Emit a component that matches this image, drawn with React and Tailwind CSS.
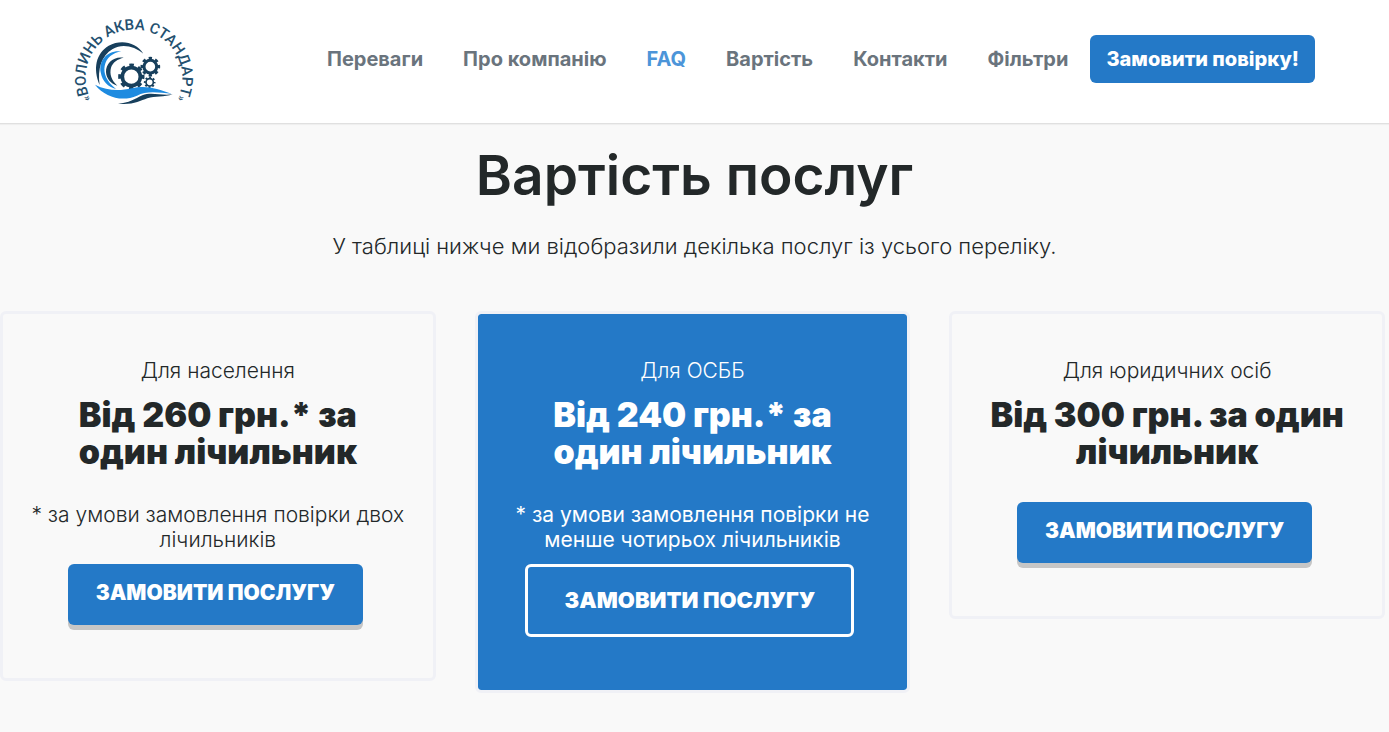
import React from 'react'

const navLinks = [
  { label: 'Переваги', href: '#advantages' },
  { label: 'Про компанію', href: '#about' },
  { label: 'FAQ', href: '#faq', active: true },
  { label: 'Вартість', href: '#pricing' },
  { label: 'Контакти', href: '#contacts' },
  { label: 'Фільтри', href: '#filters' },
]

const plans = [
  {
    title: 'Для населення',
    price: ['Від 260 грн.* за', 'один лічильник'],
    note: ['* за умови замовлення повірки двох', 'лічильників'],
  },
  {
    title: 'Для ОСББ',
    price: ['Від 240 грн.* за', 'один лічильник'],
    note: ['* за умови замовлення повірки не', 'менше чотирьох лічильників'],
    featured: true,
  },
  {
    title: 'Для юридичних осіб',
    price: ['Від 300 грн. за один', 'лічильник'],
  },
]

// Ring with square teeth: the dashed circle draws the teeth
const Gear = ({ cx, cy, r, width, teeth, tooth }) => (
  <g fill="none" stroke="#173f5c">
    <circle cx={cx} cy={cy} r={r} strokeWidth={width} />
    <circle
      cx={cx}
      cy={cy}
      r={r + width / 2 + tooth / 2 - 1}
      strokeWidth={tooth + 2}
      pathLength={teeth * 2}
      strokeDasharray="1 1"
      strokeDashoffset="0.5"
    />
  </g>
)

const Logo = () => (
  <svg viewBox="42 36 360 264" className="w-[120px] h-[88px] overflow-visible" role="img" aria-label="Волинь Аква Стандарт">
    <path id="logo-arc" d="M100 297 A145 145 0 1 1 344 297" fill="none" />
    <text fill="#24506f" textAnchor="middle" className="font-['Roboto',sans-serif] font-medium text-[45px]">
      <textPath href="#logo-arc" startOffset="50%">
        <tspan className="text-[32px]">«</tspan>ВОЛИНЬ АКВА СТАНДАРТ<tspan className="text-[32px]">»</tspan>
      </textPath>
    </text>
    <path d="M119 240 C98 190 108 145 146 122 C184 102 229 112 250 146 C224 124 187 115 158 132 C124 152 112 193 119 240Z" fill="#173f5c" />
    <path d="M184 139 C142 134 116 166 122 202 C127 230 144 246 168 252 C139 229 130 206 134 183 C139 158 158 144 184 139Z" fill="#1e8be0" />
    <path d="M191 158 C161 153 137 174 138 201 C139 221 153 237 172 242 C154 225 148 207 153 188 C158 172 173 162 191 158Z" fill="#173f5c" />
    <Gear cx={214} cy={215} r={27} width={11} teeth={8} tooth={7} />
    <Gear cx={271} cy={185} r={19} width={9} teeth={8} tooth={6} />
    <Gear cx={269} cy={232} r={11} width={5} teeth={8} tooth={4} />
    <path d="M105 239 C140 257 177 259 215 250 C258 239 292 251 335 266 C298 263 260 256 231 272 C187 291 136 278 105 239Z" fill="#1e8be0" />
    <path d="M174 296 C207 295 225 281 247 271 C275 260 303 273 338 268 C313 277 285 273 262 280 C240 288 216 301 174 296Z" fill="#173f5c" />
  </svg>
)

const Header = () => (
  <header className="bg-white border-b border-[#e0e0e0] shadow-[0_1px_1px_rgba(0,0,0,0.04)]">
    <div className="flex items-start justify-between px-[74px] pb-[18px]">
      <a href="#home" className="mt-[17px]">
        <Logo />
      </a>
      <nav className="mt-[35px] flex items-center gap-[22px]">
        <ul className="flex items-center gap-10">
          {navLinks.map((link) => (
            <li key={link.label}>
              <a
                href={link.href}
                className={link.active ? 'text-xl font-bold text-[#4c95d9]' : 'text-xl font-bold text-[#6a747d]'}
              >
                {link.label}
              </a>
            </li>
          ))}
        </ul>
        <button className="h-12 px-4 rounded-md bg-[#2479c7] text-white text-xl font-extrabold whitespace-nowrap">
          Замовити повірку!
        </button>
      </nav>
    </div>
  </header>
)

const Lines = ({ lines }) =>
  lines.map((line, i) => (
    <React.Fragment key={line}>
      {i > 0 && <br />}
      {line}
    </React.Fragment>
  ))

const PlanCard = ({ title, price, note, featured }) => (
  <article
    className={
      featured
        ? 'rounded-md border-[3px] border-[#f0f1f6] bg-[#2479c7] bg-clip-padding pt-11 pb-[53px] text-center text-white'
        : 'rounded-md border-[3px] border-[#f0f1f6] pt-11 pb-[53px] text-center'
    }
  >
    <p className="text-[21px] leading-[25px] font-light mb-[13px]">{title}</p>
    <h3 className="text-[34px] leading-[37px] font-black mb-8">
      <Lines lines={price} />
    </h3>
    {note && (
      <p className={featured ? 'text-[21px] leading-[25px] mb-3' : 'text-[21px] leading-[25px] font-light mb-3'}>
        <Lines lines={note} />
      </p>
    )}
    <button
      className={
        featured
          ? 'mr-[5px] h-[73px] w-[329px] align-top rounded-md border-[3px] border-white text-[22px] font-black uppercase'
          : 'mr-[5px] h-[61px] w-[295px] align-top rounded-md bg-[#2479c7] text-white text-[21px] font-black uppercase pb-[3px] shadow-[0_5px_0_#c6c6c6]'
      }
    >
      Замовити послугу
    </button>
  </article>
)

const App = () => {
  return (
    <div className="min-h-screen bg-[#f9f9f9] text-[#232829] font-['Inter',sans-serif]">
      <Header />
      <main id="pricing" className="pt-[22px] pb-10">
        <h2 className="text-center text-[55px] leading-[58px] font-semibold">Вартість послуг</h2>
        <p className="mt-[30px] text-center text-[22px] leading-[25px] font-light">
          У таблиці нижче ми відобразили декілька послуг із усього переліку.
        </p>
        <div className="mt-[52px] pr-1 grid grid-cols-3 items-start gap-[39px]">
          {plans.map((plan) => (
            <PlanCard key={plan.title} {...plan} />
          ))}
        </div>
      </main>
    </div>
  )
}

export default App
